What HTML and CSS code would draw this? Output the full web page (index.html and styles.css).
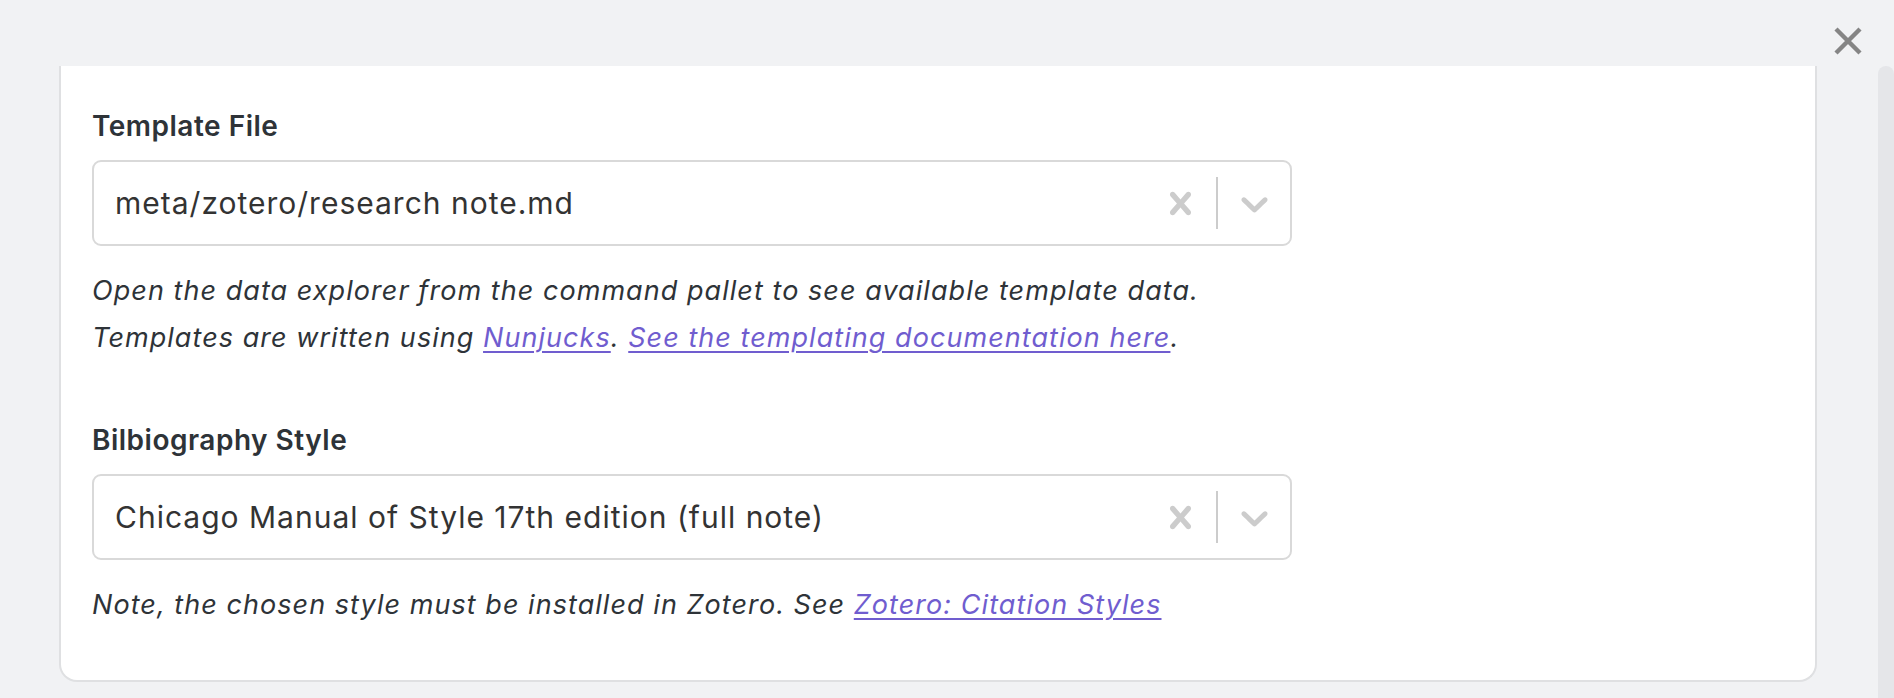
FILE: index.html
```html
<!DOCTYPE html>
<html lang="en">
<head>
<meta charset="utf-8">
<title>Zotero Integration settings</title>
<link rel="stylesheet" href="styles.css">
</head>
<body>
<div class="modal">
  <button class="modal-close" aria-label="Close">
    <svg viewBox="0 0 30 30" width="30" height="30"><path d="M3 3 L27 27 M27 3 L3 27" stroke="#858585" stroke-width="4.4" stroke-linecap="butt" fill="none"/></svg>
  </button>
  <div class="scroll-row">
    <div class="card">
      <section class="field">
        <div class="field-label">Template File</div>
        <div class="select">
          <div class="select-value">meta/zotero/research note.md</div>
          <div class="indicators">
            <div class="indicator">
              <svg viewBox="0 0 20 20" width="45" height="45"><path fill="#cccccc" d="M14.348 14.849c-0.469 0.469-1.229 0.469-1.697 0l-2.651-3.030-2.651 3.029c-0.469 0.469-1.229 0.469-1.697 0-0.469-0.469-0.469-1.229 0-1.697l2.758-3.150-2.759-3.152c-0.469-0.469-0.469-1.228 0-1.697s1.228-0.469 1.697 0l2.652 3.031 2.651-3.031c0.469-0.469 1.228-0.469 1.697 0s0.469 1.229 0 1.697l-2.758 3.152 2.758 3.150c0.469 0.469 0.469 1.229 0 1.698z"/></svg>
            </div>
            <span class="separator"></span>
            <div class="indicator">
              <svg viewBox="0 0 20 20" width="45" height="45"><path fill="#cccccc" d="M4.516 7.548c0.436-0.446 1.043-0.481 1.576 0l3.908 3.747 3.908-3.747c0.533-0.481 1.141-0.446 1.574 0 0.436 0.445 0.408 1.197 0 1.615-0.406 0.418-4.695 4.502-4.695 4.502-0.217 0.223-0.502 0.335-0.787 0.335s-0.57-0.112-0.789-0.335c0 0-4.287-4.084-4.695-4.502s-0.436-1.170 0-1.615z"/></svg>
            </div>
          </div>
        </div>
        <div class="field-desc">
          <div>Open the data explorer from the command pallet to see available template data.</div>
          <div>Templates are written using <a href="#">Nunjucks</a>. <a href="#">See the templating documentation here</a>.</div>
        </div>
      </section>
      <section class="field field-second">
        <div class="field-label">Bilbiography Style</div>
        <div class="select">
          <div class="select-value">Chicago Manual of Style 17th edition (full note)</div>
          <div class="indicators">
            <div class="indicator">
              <svg viewBox="0 0 20 20" width="45" height="45"><path fill="#cccccc" d="M14.348 14.849c-0.469 0.469-1.229 0.469-1.697 0l-2.651-3.030-2.651 3.029c-0.469 0.469-1.229 0.469-1.697 0-0.469-0.469-0.469-1.229 0-1.697l2.758-3.150-2.759-3.152c-0.469-0.469-0.469-1.228 0-1.697s1.228-0.469 1.697 0l2.652 3.031 2.651-3.031c0.469-0.469 1.228-0.469 1.697 0s0.469 1.229 0 1.697l-2.758 3.152 2.758 3.150c0.469 0.469 0.469 1.229 0 1.698z"/></svg>
            </div>
            <span class="separator"></span>
            <div class="indicator">
              <svg viewBox="0 0 20 20" width="45" height="45"><path fill="#cccccc" d="M4.516 7.548c0.436-0.446 1.043-0.481 1.576 0l3.908 3.747 3.908-3.747c0.533-0.481 1.141-0.446 1.574 0 0.436 0.445 0.408 1.197 0 1.615-0.406 0.418-4.695 4.502-4.695 4.502-0.217 0.223-0.502 0.335-0.787 0.335s-0.57-0.112-0.789-0.335c0 0-4.287-4.084-4.695-4.502s-0.436-1.170 0-1.615z"/></svg>
            </div>
          </div>
        </div>
        <div class="field-desc">
          <div>Note, the chosen style must be installed in Zotero. See <a href="#">Zotero: Citation Styles</a></div>
        </div>
      </section>
    </div>
    <div class="scrollbar"></div>
  </div>
</div>
</body>
</html>
```

FILE: styles.css
```css
html, body {
  margin: 0;
  padding: 0;
  height: 698px;
  overflow: hidden;
  background: #f1f2f4;
  font-family: Inter, "Liberation Sans", sans-serif;
  color: #2e3338;
}

.modal {
  position: relative;
  height: 698px;
  padding-top: 66px;
  box-sizing: border-box;
}

.modal-close {
  position: absolute;
  top: 26px;
  right: 31px;
  width: 30px;
  height: 30px;
  padding: 0;
  border: 0;
  background: none;
  display: flex;
}

.scroll-row {
  display: flex;
  align-items: flex-start;
  padding-left: 59px;
  height: 632px;
}

.card {
  width: 1758px;
  box-sizing: border-box;
  background: #ffffff;
  border: 2px solid #dfe0e2;
  border-top: none;
  border-radius: 0 0 18px 18px;
  padding: 44px 0 52px 31px;
}

.scrollbar {
  margin-left: 61px;
  width: 16px;
  height: 632px;
  background: #e5e6e9;
  border-radius: 8px 8px 0 0;
}

.field-second {
  margin-top: 63px;
}

.field-label {
  font-size: 28px;
  line-height: 32px;
  font-weight: 600;
  letter-spacing: 0.5px;
  color: #2e3338;
}

.select {
  margin-top: 18px;
  width: 1200px;
  height: 86px;
  box-sizing: border-box;
  border: 2px solid #d9d9d9;
  border-radius: 9px;
  display: flex;
  align-items: center;
  background: #fff;
}

.select-value {
  flex: 1;
  padding-left: 21px;
  font-size: 30px;
  letter-spacing: 1px;
  color: #333333;
  white-space: nowrap;
}

.indicators {
  display: flex;
  align-items: center;
  align-self: stretch;
}

.indicator {
  width: 72px;
  display: flex;
  justify-content: center;
  align-items: center;
}

.indicator svg {
  display: block;
}

.separator {
  width: 2px;
  height: 52px;
  background: #cccccc;
}

.field-desc {
  margin-top: 21px;
  font-size: 27px;
  line-height: 47px;
  letter-spacing: 1.05px;
  font-style: italic;
  color: #2e3338;
}

.field-desc a {
  color: #705dcf;
  text-decoration: underline;
  text-decoration-thickness: 2px;
  text-underline-offset: 4px;
}
```
